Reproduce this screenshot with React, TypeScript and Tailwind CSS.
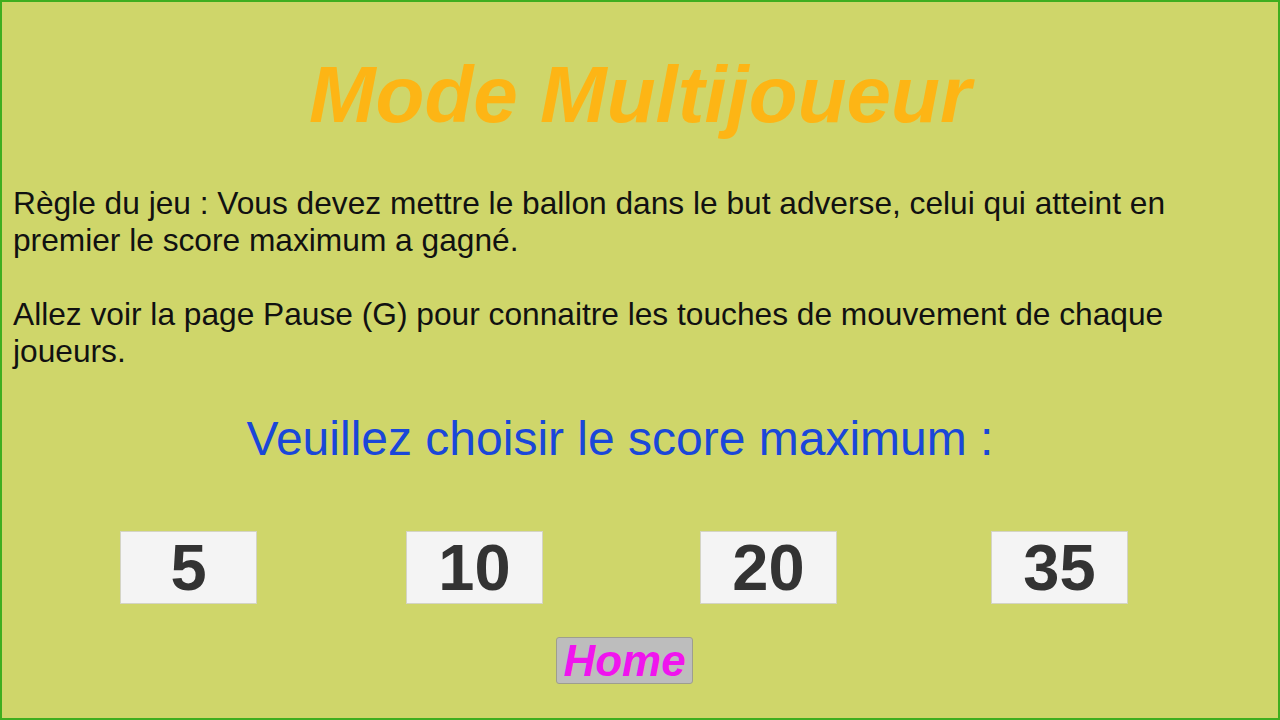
import React from "react";

export default function App() {
  const scores = [
    { v: "5", ml: "ml-[118px]" },
    { v: "10", ml: "ml-[149px]" },
    { v: "20", ml: "ml-[157px]" },
    { v: "35", ml: "ml-[154px]" },
  ];
  return (
    <div
      className="w-[1280px] h-[720px] border-2 border-[#3fae1f] bg-[#cfd66a] flex flex-col overflow-hidden"
      style={{ fontFamily: '"Liberation Sans", Arial, sans-serif' }}
    >
      <h1 className="mt-[53px] h-[80px] leading-[80px] text-center text-[80px] font-bold italic text-[#fdb515]">
        Mode Multijoueur
      </h1>
      <div className="mt-[50px] pl-[11px] pr-[50px] text-[31.7px] leading-[37px] text-[#111]">
        <p>
          Règle du jeu : Vous devez mettre le ballon dans le but adverse, celui qui atteint en premier le score maximum a
          gagné.
        </p>
        <p className="mt-[37px]">
          Allez voir la page Pause (G) pour connaitre les touches de mouvement de chaque joueurs.
        </p>
      </div>
      <p className="mt-[41px] h-[56px] leading-[56px] text-center pr-[40px] text-[48px] text-[#1a47d9]">
        Veuillez choisir le score maximum :
      </p>
      <div className="mt-[64px] flex">
        {scores.map((s) => (
          <button
            key={s.v}
            className={`${s.ml} w-[137px] h-[73px] bg-[#f4f4f4] border border-[#d4d4c4] flex items-center justify-center text-[65px] font-bold text-[#333333] leading-none`}
          >
            {s.v}
          </button>
        ))}
      </div>
      <div className="mt-[33px] flex">
        <button className="ml-[554px] w-[137px] h-[47px] bg-[#bdbdbd] border border-[#9e9e8e] rounded-[3px] flex items-center justify-center text-[44px] font-bold italic text-[#f014ee] leading-none">
          Home
        </button>
      </div>
    </div>
  );
}
